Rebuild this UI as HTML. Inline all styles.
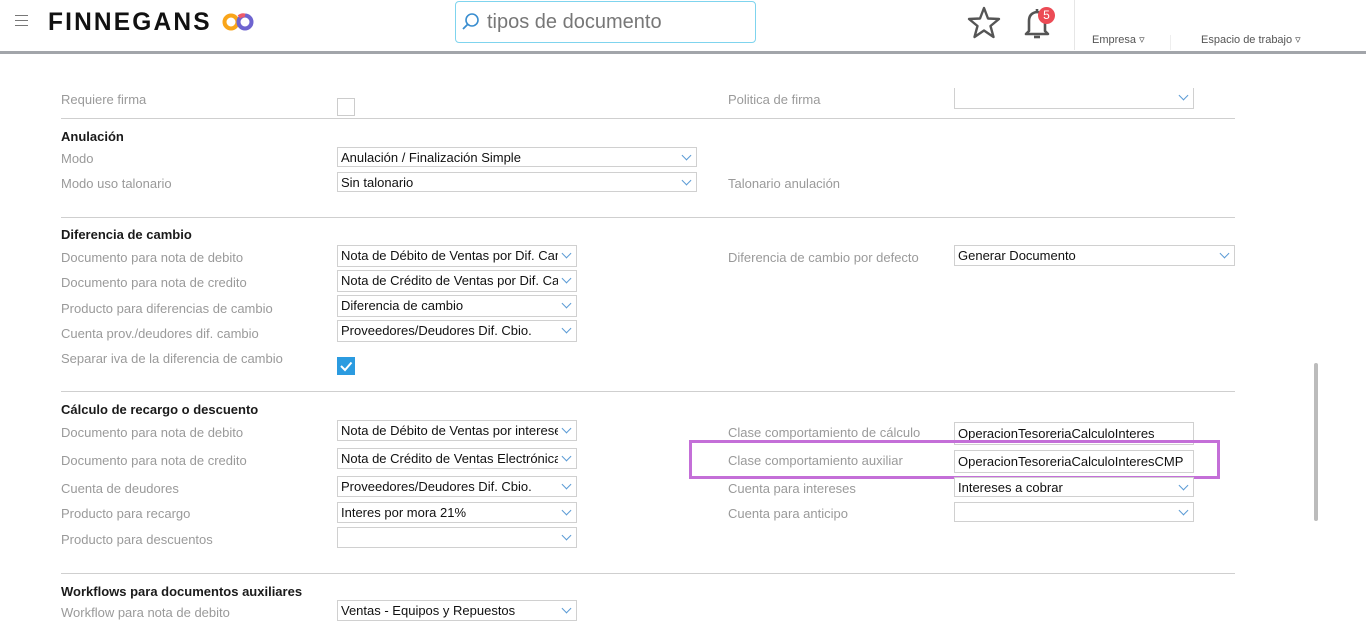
<!DOCTYPE html>
<html><head><meta charset="utf-8"><style>
*{margin:0;padding:0;box-sizing:border-box}
body{width:1366px;height:615px;overflow:hidden;background:#fff;font-family:"Liberation Sans",sans-serif;position:relative}
.a{position:absolute}
.l{position:absolute;font-size:13px;color:#9a9a9a;line-height:15px;white-space:nowrap}
.h{position:absolute;font-size:13px;color:#1a1a1a;font-weight:bold;line-height:15px}
.s{position:absolute;border:1px solid #d0d0d0;background:#fff;font-size:13px;color:#111;line-height:20px;padding-left:3px;white-space:nowrap;overflow:hidden}
.s.c::after{content:"";position:absolute;right:6px;top:4px;width:6px;height:6px;border-right:1.5px solid #5b9bd5;border-bottom:1.5px solid #5b9bd5;transform:rotate(45deg)}
.s span{display:block;overflow:hidden;margin-right:18px}
.hr{position:absolute;left:61px;width:1174px;height:1px;background:#cfcfcf}
</style></head><body>
<div class="a" style="left:0;top:51px;width:1366px;height:3px;background:#a2a5aa"></div>
<div class="a" style="left:15px;top:15px;width:13px;height:1px;background:#777;box-shadow:0 5px 0 #777,0 10px 0 #777"></div>
<div class="a" style="left:48px;top:8px;font-size:25px;font-weight:bold;letter-spacing:2.2px;color:#111;line-height:28px;transform:scaleX(0.98);transform-origin:left">FINNEGANS</div>
<svg class="a" style="left:221px;top:12px" width="34" height="20"><circle cx="10" cy="10" r="6.5" fill="none" stroke="#f9a51a" stroke-width="4"/><circle cx="24" cy="10" r="6.5" fill="none" stroke="#6e64d0" stroke-width="4"/><path d="M18 5 A6.5 6.5 0 0 1 24 3.5" stroke="#ee5a6a" stroke-width="4" fill="none"/></svg>
<div class="a" style="left:455px;top:1px;width:301px;height:42px;border:1px solid #7fd4ee;border-radius:4px"></div>
<svg class="a" style="left:461px;top:12px" width="20" height="20"><circle cx="11" cy="8" r="6" fill="none" stroke="#3a8ed0" stroke-width="1.6"/><path d="M7 12 L2 17" stroke="#3a8ed0" stroke-width="1.8"/></svg>
<div class="a" style="left:487px;top:10px;font-size:20px;color:#777;line-height:24px">tipos de documento</div>
<svg class="a" style="left:966px;top:5px" width="36" height="34"><path d="M18 3 L22 13.5 L33 14 L24.5 21 L27.5 32 L18 25.5 L8.5 32 L11.5 21 L3 14 L14 13.5 Z" fill="none" stroke="#555" stroke-width="2.4" stroke-linejoin="round"/></svg>
<svg class="a" style="left:1020px;top:5px" width="36" height="36"><path d="M17 4 L17 7 M9 26 L9 16 Q9 8 17 7 Q25 8 25 16 L25 26 L28 29 L6 29 L9 26Z" fill="none" stroke="#555" stroke-width="2.6" stroke-linejoin="round"/><path d="M14 32 L20 32" stroke="#555" stroke-width="2.6"/></svg>
<div class="a" style="left:1038px;top:7px;width:17px;height:17px;border-radius:50%;background:#ec4b55;color:#fff;font-size:12px;text-align:center;line-height:17px">5</div>
<div class="a" style="left:1074px;top:0;width:1px;height:50px;background:#e6e6e6"></div>
<div class="a" style="left:1170px;top:35px;width:1px;height:15px;background:#eee"></div>
<div class="a" style="left:1092px;top:33px;font-size:11px;color:#555;line-height:14px">Empresa ▿</div>
<div class="a" style="left:1201px;top:33px;font-size:11px;color:#555;line-height:14px">Espacio de trabajo ▿</div>
<div class="a" style="left:1314px;top:363px;width:4px;height:158px;background:#bcbcbc;border-radius:2px"></div>

<div class="l" style="left:61px;top:92px">Requiere firma</div>
<div class="a" style="left:337px;top:98px;width:18px;height:18px;border:1px solid #ccc"></div>
<div class="l" style="left:728px;top:92px">Politica de firma</div>
<div class="s c" style="left:954px;top:88px;width:240px;height:21px;border-top:none"></div>
<div class="hr" style="top:118px"></div>

<div class="h" style="left:61px;top:129px">Anulación</div>
<div class="l" style="left:61px;top:151px">Modo</div>
<div class="s c" style="left:337px;top:147px;width:360px;height:20px;line-height:19px"><span>Anulación / Finalización Simple</span></div>
<div class="l" style="left:61px;top:176px">Modo uso talonario</div>
<div class="s c" style="left:337px;top:172px;width:360px;height:20px;line-height:19px"><span>Sin talonario</span></div>
<div class="l" style="left:728px;top:176px">Talonario anulación</div>
<div class="hr" style="top:217px"></div>

<div class="h" style="left:61px;top:227px">Diferencia de cambio</div>
<div class="l" style="left:61px;top:250px">Documento para nota de debito</div>
<div class="s c" style="left:337px;top:245px;width:240px;height:22px"><span>Nota de Débito de Ventas por Dif. Cambio</span></div>
<div class="l" style="left:61px;top:275px">Documento para nota de credito</div>
<div class="s c" style="left:337px;top:270px;width:240px;height:22px"><span>Nota de Crédito de Ventas por Dif. Cambio</span></div>
<div class="l" style="left:61px;top:301px">Producto para diferencias de cambio</div>
<div class="s c" style="left:337px;top:295px;width:240px;height:22px"><span>Diferencia de cambio</span></div>
<div class="l" style="left:61px;top:326px">Cuenta prov./deudores dif. cambio</div>
<div class="s c" style="left:337px;top:320px;width:240px;height:22px"><span>Proveedores/Deudores Dif. Cbio.</span></div>
<div class="l" style="left:61px;top:351px">Separar iva de la diferencia de cambio</div>
<div class="a" style="left:337px;top:357px;width:18px;height:18px;background:#2b9be0"><svg width="18" height="18"><path d="M4 9 L8 13 L14.5 5.5" fill="none" stroke="#fff" stroke-width="2"/></svg></div>
<div class="l" style="left:728px;top:250px">Diferencia de cambio por defecto</div>
<div class="s c" style="left:954px;top:245px;width:281px;height:21px"><span>Generar Documento</span></div>
<div class="hr" style="top:391px"></div>

<div class="h" style="left:61px;top:402px">Cálculo de recargo o descuento</div>
<div class="l" style="left:61px;top:425px">Documento para nota de debito</div>
<div class="s c" style="left:337px;top:420px;width:240px;height:21px"><span>Nota de Débito de Ventas por intereses</span></div>
<div class="l" style="left:61px;top:453px">Documento para nota de credito</div>
<div class="s c" style="left:337px;top:448px;width:240px;height:21px"><span>Nota de Crédito de Ventas Electrónica</span></div>
<div class="l" style="left:61px;top:481px">Cuenta de deudores</div>
<div class="s c" style="left:337px;top:476px;width:240px;height:21px"><span>Proveedores/Deudores Dif. Cbio.</span></div>
<div class="l" style="left:61px;top:506px">Producto para recargo</div>
<div class="s c" style="left:337px;top:502px;width:240px;height:21px"><span>Interes por mora 21%</span></div>
<div class="l" style="left:61px;top:532px">Producto para descuentos</div>
<div class="s c" style="left:337px;top:527px;width:240px;height:21px"></div>

<div class="l" style="left:728px;top:425px">Clase comportamiento de cálculo</div>
<div class="s" style="left:954px;top:422px;width:240px;height:23px;line-height:22px">OperacionTesoreriaCalculoInteres</div>
<div class="l" style="left:728px;top:453px">Clase comportamiento auxiliar</div>
<div class="s" style="left:954px;top:450px;width:240px;height:23px;line-height:22px">OperacionTesoreriaCalculoInteresCMP</div>
<div class="a" style="left:689px;top:440px;width:531px;height:39px;border:3px solid #c46fd8"></div>
<div class="l" style="left:728px;top:481px">Cuenta para intereses</div>
<div class="s c" style="left:954px;top:477px;width:240px;height:20px;line-height:19px"><span>Intereses a cobrar</span></div>
<div class="l" style="left:728px;top:506px">Cuenta para anticipo</div>
<div class="s c" style="left:954px;top:502px;width:240px;height:20px"></div>
<div class="hr" style="top:573px"></div>

<div class="h" style="left:61px;top:584px">Workflows para documentos auxiliares</div>
<div class="l" style="left:61px;top:605px">Workflow para nota de debito</div>
<div class="s c" style="left:337px;top:600px;width:240px;height:21px"><span>Ventas - Equipos y Repuestos</span></div>
</body></html>
